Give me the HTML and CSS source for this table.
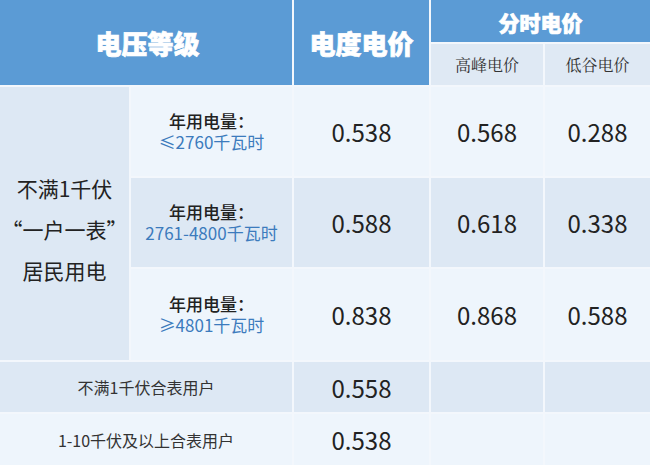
FILE: index.html
```html
<!DOCTYPE html>
<html lang="zh">
<head>
<meta charset="utf-8">
<link rel="stylesheet" href="styles.css">
</head>
<body>
<div class="table">
  <div class="cell head h-level">电压等级</div>
  <div class="cell head h-price">电度电价</div>
  <div class="cell head h-tou">分时电价</div>
  <div class="cell sub">高峰电价</div>
  <div class="cell sub">低谷电价</div>

  <div class="cell cat">不满1千伏<br>“一户一表”<br>居民用电</div>

  <div class="cell band light"><span class="lbl">年用电量：</span><span class="rng">≤2760千瓦时</span></div>
  <div class="cell num light">0.538</div>
  <div class="cell num light">0.568</div>
  <div class="cell num light">0.288</div>

  <div class="cell band dark"><span class="lbl">年用电量：</span><span class="rng">2761-4800千瓦时</span></div>
  <div class="cell num dark">0.588</div>
  <div class="cell num dark">0.618</div>
  <div class="cell num dark">0.338</div>

  <div class="cell band light"><span class="lbl">年用电量：</span><span class="rng">≥4801千瓦时</span></div>
  <div class="cell num light">0.838</div>
  <div class="cell num light">0.868</div>
  <div class="cell num light">0.588</div>

  <div class="cell other dark">不满1千伏合表用户</div>
  <div class="cell num dark">0.558</div>
  <div class="cell dark"></div>
  <div class="cell dark"></div>

  <div class="cell other light">1-10千伏及以上合表用户</div>
  <div class="cell num light">0.538</div>
  <div class="cell light"></div>
  <div class="cell light"></div>
</div>
</body>
</html>
```

FILE: styles.css
```css
html, body {
  margin: 0;
  padding: 0;
  background: #ffffff;
}

body {
  width: 650px;
  height: 465px;
  overflow: hidden;
  font-family: "Noto Sans CJK SC", "Noto Sans", sans-serif;
  color: #222;
}

.table {
  display: grid;
  grid-template-columns: 129px 161px 135px 112px 105px;
  grid-template-rows: 42px 41px 89px 89px 91px 50px 51px;
  gap: 2px;
  background: #f3f7fc;
  width: 650px;
  height: 465px;
}

.cell {
  display: flex;
  align-items: center;
  justify-content: center;
  text-align: center;
}

.head {
  background: #5b9bd5;
  color: #fff;
  font-weight: 900;
  font-size: 26px;
  -webkit-text-stroke: 0.7px #fff;
}

.h-level {
  grid-column: 1 / 3;
  grid-row: 1 / 3;
  padding-left: 3px;
}

.h-price {
  grid-column: 3 / 4;
  grid-row: 1 / 3;
}

.h-tou {
  grid-column: 4 / 6;
  grid-row: 1 / 2;
  font-size: 21px;
  padding-top: 1px;
}

.sub {
  background: #dfe9f4;
  font-size: 16px;
  color: #333;
  font-family: "Noto Serif CJK SC", "Noto Sans CJK SC", serif;
}

.cat {
  grid-column: 1 / 2;
  grid-row: 3 / 6;
  background: #dde8f4;
  font-size: 21px;
  line-height: 41px;
  color: #222;
  padding-top: 11px;
}

.light {
  background: #eef5fc;
}

.dark {
  background: #dde8f4;
}

.band {
  flex-direction: column;
  font-size: 17px;
  line-height: 21px;
  padding-bottom: 1px;
}

.lbl {
  font-weight: 500;
  color: #222;
}

.rng {
  color: #3c7bbd;
}

.num {
  font-size: 24px;
  color: #222;
}

.other {
  grid-column: 1 / 3;
  font-size: 16px;
  color: #333;
}
```
